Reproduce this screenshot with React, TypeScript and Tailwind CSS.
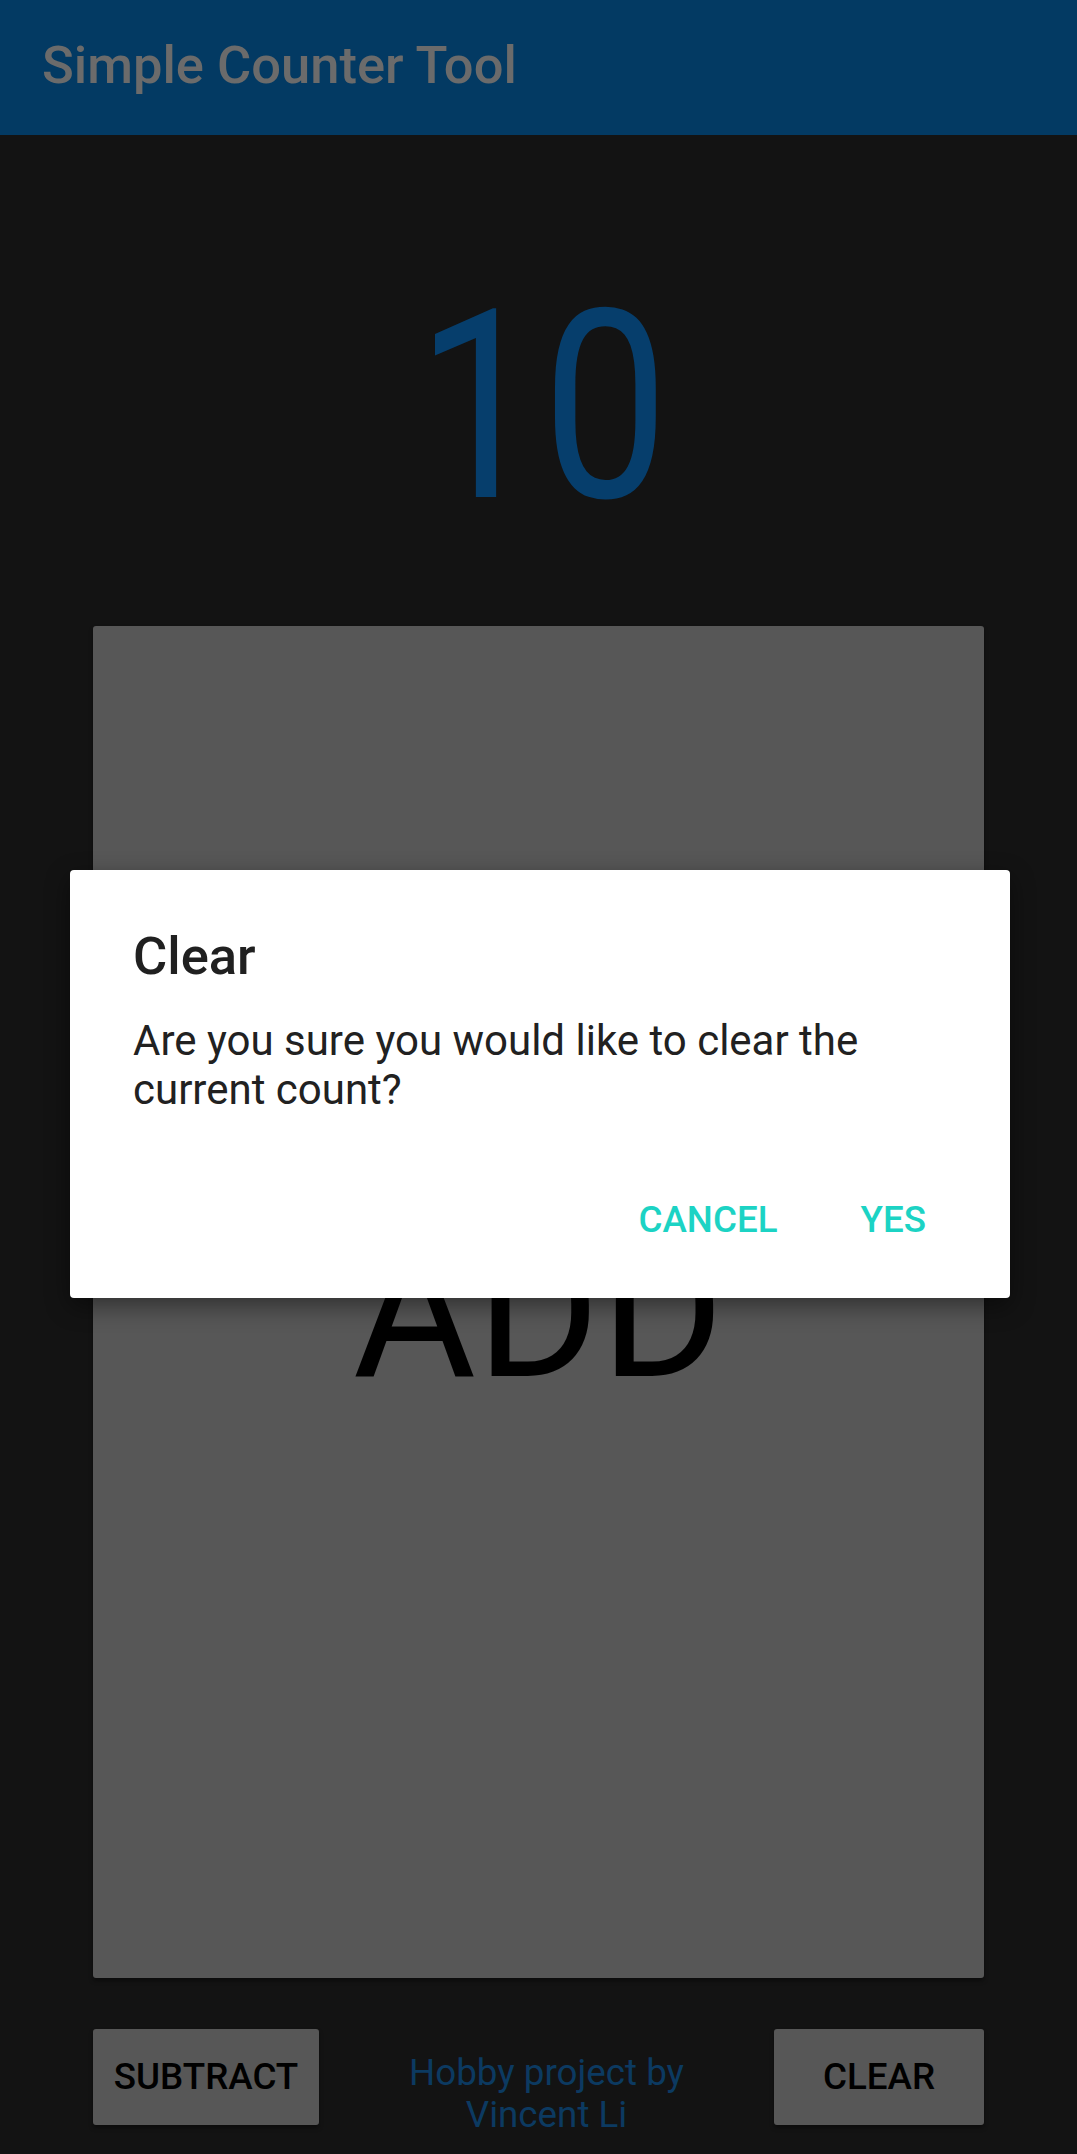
import React from "react";

/** Counter screen with the "Clear" confirmation dialog open over it. */
function ClearDialog() {
  return (
    <div className="absolute left-[70px] top-[870px] w-[940px] rounded-[4px] bg-white px-[63px] pb-[57px] pt-[55px] shadow-[0_8px_24px_rgba(0,0,0,0.45)]">
      <h2 className="text-[52.5px] font-medium leading-[62px] text-[#202020]">Clear</h2>
      <p className="mt-[29px] text-[42px] leading-[49px] text-[#212121]">
        Are you sure you would like to clear the current count?
      </p>
      <div className="mt-[84px] flex justify-end gap-[83px] pr-[21px] text-[36.75px] font-medium leading-[43px] text-[#1cd3c4]">
        <button type="button">CANCEL</button>
        <button type="button">YES</button>
      </div>
    </div>
  );
}

export default function App() {
  return (
    <div
      className="relative flex h-[2154px] w-full flex-col overflow-hidden bg-[#131313]"
      style={{ fontFamily: "Roboto, 'Noto Sans', sans-serif" }}
    >
      <header className="h-[135px] bg-[#033a63] pl-[42px] pt-[34px]">
        <h1 className="text-[52.5px] font-medium leading-[62px] text-[#6b6b6b]">Simple Counter Tool</h1>
      </header>

      {/* the counter uses a condensed face; squeeze Roboto to match */}
      <div className="mt-[117px] flex justify-center pl-[8px] text-[264px] leading-[309px] text-[#063e6c]">
        <span className="inline-block scale-x-[0.85]">10</span>
      </div>

      <button
        type="button"
        className="mx-[93px] mt-[65px] flex h-[1352px] items-center justify-center rounded-[3px] bg-[#575757] pt-[18px] text-[189px] leading-[221px] text-black shadow-[0_3px_4px_rgba(0,0,0,0.4)]"
      >
        ADD
      </button>

      <div className="mt-[51px] flex items-start px-[93px]">
        <button
          type="button"
          className="flex h-[96px] w-[226px] items-center justify-center rounded-[3px] bg-[#575757] text-[36.75px] font-medium text-black shadow-[0_3px_4px_rgba(0,0,0,0.4)]"
        >
          SUBTRACT
        </button>
        <p className="mt-[23px] flex-1 text-center text-[36.75px] leading-[42px] text-[#0c3a61]">
          Hobby project by
          <br />
          Vincent Li
        </p>
        <button
          type="button"
          className="flex h-[96px] w-[210px] items-center justify-center rounded-[3px] bg-[#575757] text-[36.75px] font-medium text-black shadow-[0_3px_4px_rgba(0,0,0,0.4)]"
        >
          CLEAR
        </button>
      </div>

      <ClearDialog />
    </div>
  );
}
